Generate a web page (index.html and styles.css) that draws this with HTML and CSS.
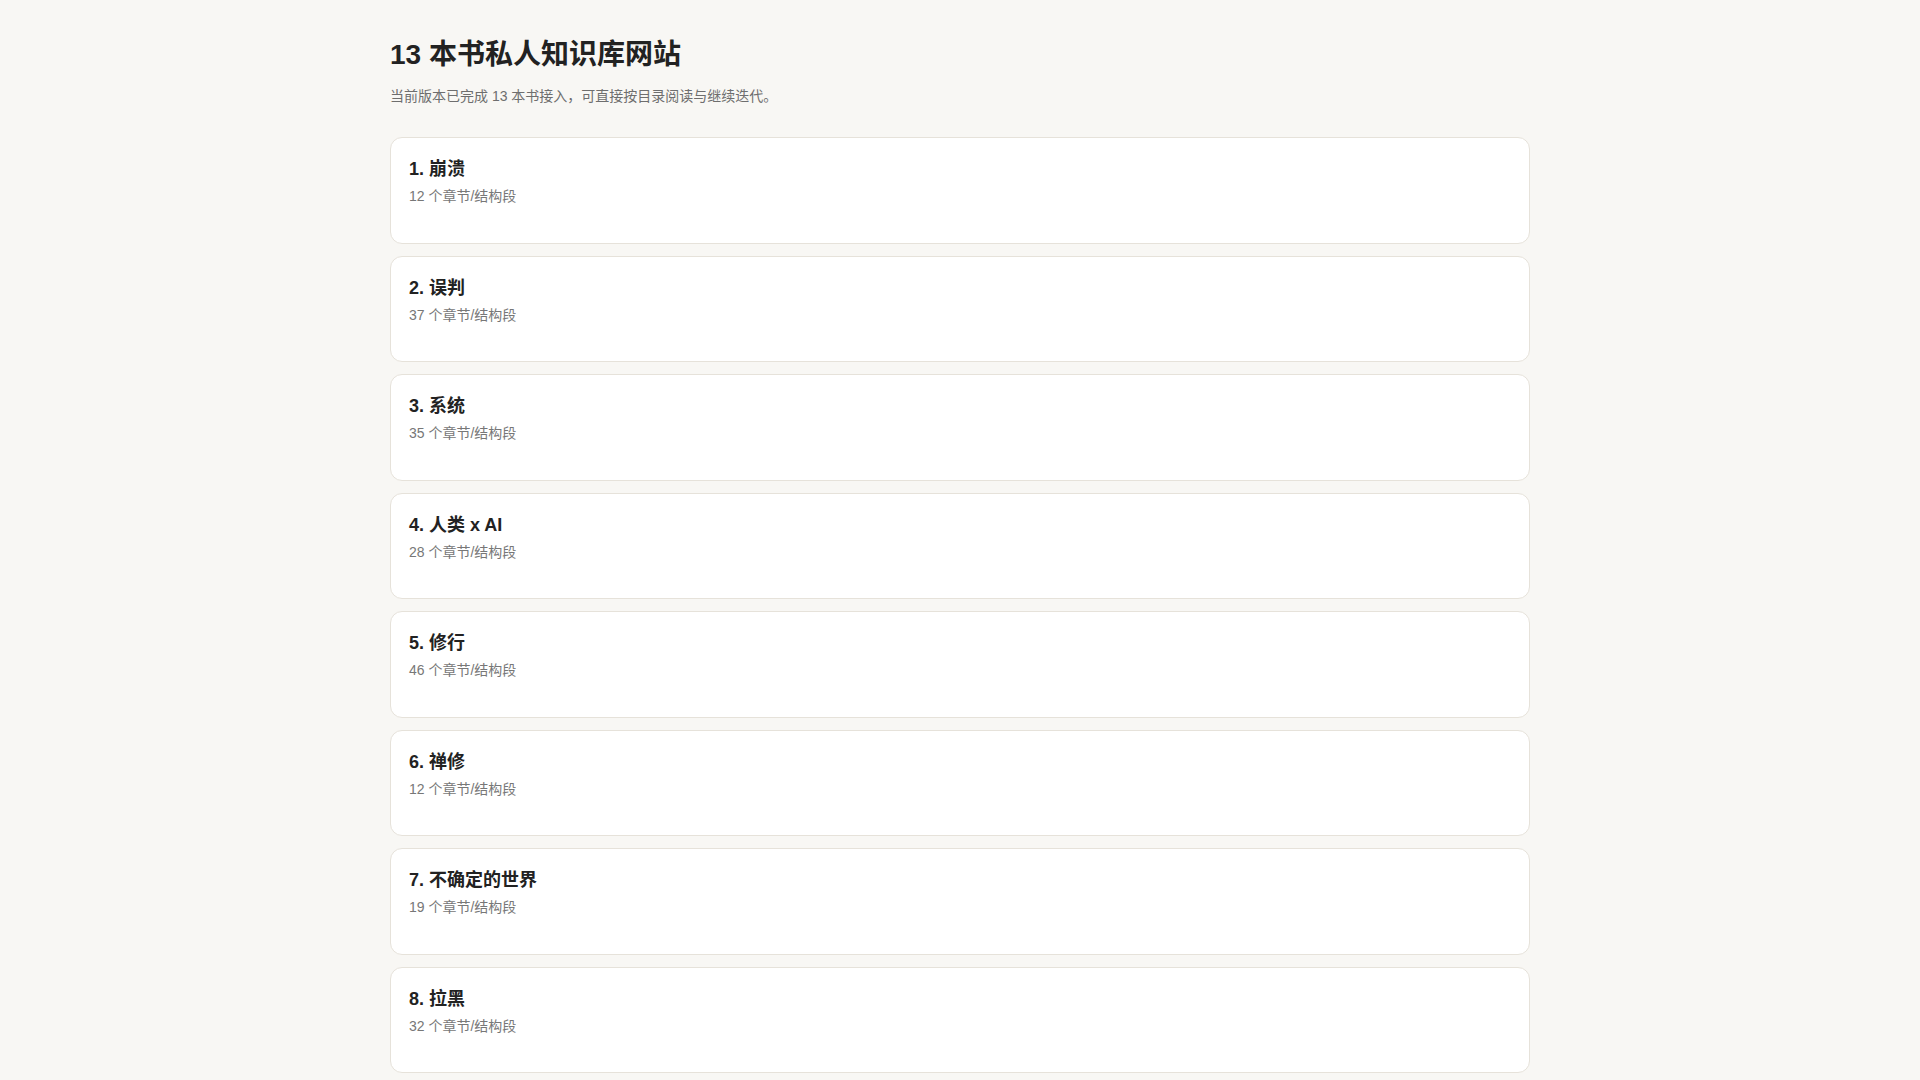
FILE: index.html
```html
<!DOCTYPE html>
<html lang="zh-CN">
<head>
<meta charset="utf-8">
<title>13 本书私人知识库网站</title>
<link rel="stylesheet" href="styles.css">
</head>
<body>
<main class="page">
  <header class="page-header">
    <h1 class="page-title">13 本书私人知识库网站</h1>
    <p class="page-desc">当前版本已完成 13 本书接入，可直接按目录阅读与继续迭代。</p>
  </header>
  <section class="book-list">
    <a class="book-card" href="#"><h2 class="book-title">1. 崩溃</h2><p class="book-meta">12 个章节/结构段</p></a>
    <a class="book-card" href="#"><h2 class="book-title">2. 误判</h2><p class="book-meta">37 个章节/结构段</p></a>
    <a class="book-card" href="#"><h2 class="book-title">3. 系统</h2><p class="book-meta">35 个章节/结构段</p></a>
    <a class="book-card" href="#"><h2 class="book-title">4. 人类 x AI</h2><p class="book-meta">28 个章节/结构段</p></a>
    <a class="book-card" href="#"><h2 class="book-title">5. 修行</h2><p class="book-meta">46 个章节/结构段</p></a>
    <a class="book-card" href="#"><h2 class="book-title">6. 禅修</h2><p class="book-meta">12 个章节/结构段</p></a>
    <a class="book-card" href="#"><h2 class="book-title">7. 不确定的世界</h2><p class="book-meta">19 个章节/结构段</p></a>
    <a class="book-card" href="#"><h2 class="book-title">8. 拉黑</h2><p class="book-meta">32 个章节/结构段</p></a>
  </section>
</main>
</body>
</html>
```
FILE: styles.css
```css
* { box-sizing: border-box; }
html, body { margin: 0; padding: 0; }
body {
  background: #f8f7f4;
  color: #222;
  font-family: "Liberation Sans", "Noto Sans CJK SC", sans-serif;
}
.page {
  max-width: 1140px;
  margin: 0 auto;
  padding: 38px 0 40px;
}
.page-title {
  margin: 0;
  font-size: 28px;
  line-height: 34px;
  font-weight: 700;
  color: #222;
}
.page-desc {
  margin: 14px 0 0;
  font-size: 14px;
  line-height: 21px;
  color: #6e6e6e;
}
.book-list {
  margin-top: 30px;
  display: flex;
  flex-direction: column;
  gap: 12px;
}
.book-card {
  display: block;
  background: #fff;
  border: 1px solid #e6e2da;
  border-radius: 12px;
  padding: 19px 18px 36.5px;
  text-decoration: none;
  color: inherit;
}
.book-title {
  margin: 0;
  font-size: 18px;
  line-height: 25px;
  font-weight: 700;
  color: #222;
}
.book-meta {
  margin: 4px 0 0;
  font-size: 14px;
  line-height: 20px;
  color: #777;
}
```
